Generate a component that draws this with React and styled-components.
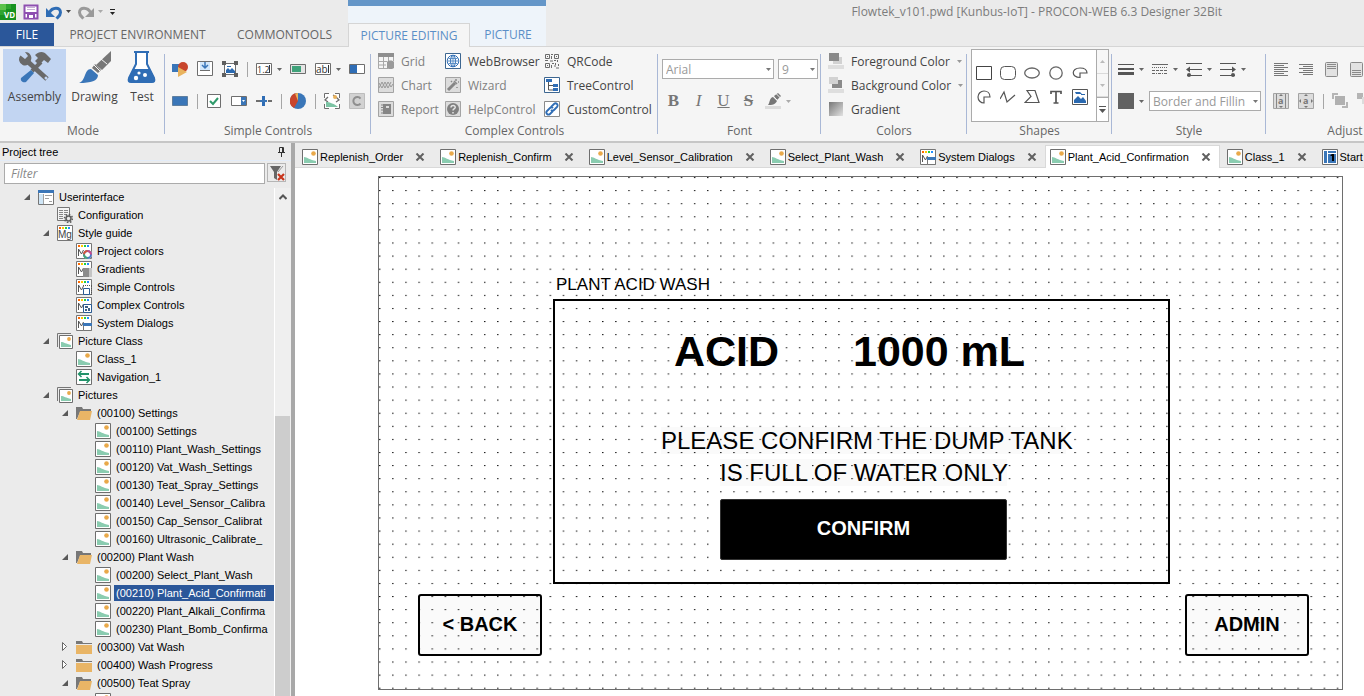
import { useState } from "react";
import styled, { createGlobalStyle } from "styled-components";

const GlobalStyle = createGlobalStyle`
    * {
        box-sizing: border-box;
    }
    body {
        margin: 0;
        overflow: hidden;
        background-color: #ebebeb;
        font-family: "Open Sans", "Noto Sans", sans-serif;
        font-size: 12px;
        color: #444444;
    }
    button, input, select {
        font: inherit;
        color: inherit;
        margin: 0;
        padding: 0;
        border: none;
        background: none;
        border-radius: 0;
    }
`;

const Page = styled.div`
    height: 100vh;
    display: flex;
    flex-direction: column;
`;

const Svg = styled.svg`
    flex: none;
    display: block;
    width: ${props => props.$size || 16}px;
    height: ${props => props.$size || 16}px;
`;

/* ---------- title bar and ribbon tabs ---------- */

const TitleBar = styled.header`
    display: flex;
    height: 23px;
`;

const QuickAccess = styled.div`
    width: 348px;
    display: flex;
    align-items: center;
    gap: 7px;
`;

const QuickButton = styled.button`
    display: flex;
    align-items: center;
    gap: 4px;
`;

const ContextHead = styled.div`
    width: 198px;
    background-color: #eef4fa;
    border-top: 6px solid #6496c8;
`;

const Title = styled.div`
    flex: 1;
    padding-right: 142px;
    line-height: 24px;
    text-align: right;
    white-space: nowrap;
    color: #7c7c7c;
`;

const RibbonTabs = styled.nav`
    display: flex;
    height: 24px;
    border-bottom: 1px solid #d5d5d5;
`;

const tabColors = {
    file: ["#2b579a", "#ffffff"],
    plain: ["transparent", "#666666"],
    active: ["#f5f5f5", "#5b8fc7"],
    context: ["#eef4fa", "#5b8fc7"],
};

const RibbonTab = styled.button`
    width: ${props => props.$width}px;
    height: ${props => props.$kind === "active" ? 24 : 23}px;
    background-color: ${props => tabColors[props.$kind][0]};
    color: ${props => tabColors[props.$kind][1]};
    border: ${props => props.$kind === "active" ? "1px solid #d5d5d5" : "none"};
    border-bottom: none;
    line-height: 22px;
    white-space: nowrap;
`;

/* ---------- ribbon ---------- */

const Ribbon = styled.div`
    display: flex;
    height: 96px;
    padding-left: 1px;
    overflow: hidden;
    background-color: #f5f5f5;
    border-bottom: 2px solid #c6c6c6;
`;

const Group = styled.section`
    flex: none;
    width: ${props => props.$width}px;
    display: flex;
    flex-direction: column;
    position: relative;

    &::after {
        content: "";
        position: absolute;
        right: 0;
        top: 7px;
        height: 80px;
        border-right: 1px solid #a9b8d6;
    }
`;

const GroupBody = styled.div`
    height: 76px;
    padding: ${props => props.$pad || "0"};
`;

const GroupName = styled.div`
    line-height: 16px;
    text-align: center;
    white-space: nowrap;
    color: #666666;
`;

const ModeRow = styled.div`
    display: flex;
`;

const ModeButton = styled.button`
    width: ${props => props.$width}px;
    height: 73px;
    padding-top: 2px;
    display: flex;
    flex-direction: column;
    align-items: center;
    background-color: ${props => props.$active ? "#c2d5f2" : "transparent"};

    span {
        line-height: 27px;
    }
`;

const ToolRow = styled.div`
    height: 32px;
    padding-left: ${props => props.$indent || 0}px;
    display: flex;
    align-items: center;
    gap: ${props => props.$gap || 8}px;
`;

const ToolButton = styled.button`
    flex: none;
    width: ${props => props.$width || 17}px;
    display: flex;
    align-items: center;
    justify-content: space-between;
`;

const Divider = styled.span`
    flex: none;
    width: 1px;
    height: 15px;
    background-color: #a6a6a6;
`;

const CommandGrid = styled.div`
    display: grid;
    grid-template-columns: ${props => props.$columns};
    grid-auto-rows: 24px;
`;

const Command = styled.button`
    display: flex;
    align-items: center;
    gap: 7px;
    white-space: nowrap;
    color: ${props => props.$muted ? "#808080" : "#444444"};
`;

const SelectBox = styled.div`
    position: relative;
    width: ${props => props.$width}px;

    select {
        appearance: none;
        display: block;
        width: 100%;
        height: 20px;
        padding: 0 14px 0 3px;
        border: 1px solid #ababab;
        background-color: #ffffff;
        color: #999999;
        overflow: hidden;
    }
    svg {
        position: absolute;
        right: 3px;
        top: 9px;
    }
`;

const Letter = styled.span`
    width: 17px;
    text-align: center;
    font-family: "Liberation Serif", serif;
    font-size: 17px;
    line-height: 20px;
    color: #777777;
    font-weight: ${props => props.$bold ? 700 : 400};
    font-style: ${props => props.$italic ? "italic" : "normal"};
    text-decoration: ${props => props.$line || "none"};
`;

const Gallery = styled.div`
    display: flex;
    height: 73px;
    background-color: #ffffff;
    border: 1px solid #ababab;
`;

const GalleryShapes = styled.div`
    flex: 1;
    padding: 11px 0 0 4px;
    display: grid;
    grid-template-columns: repeat(5, 24px);
    grid-auto-rows: 24px;
    align-items: center;
`;

const GalleryScroll = styled.div`
    width: 16px;
    display: flex;
    flex-direction: column;
    border-left: 1px solid #ababab;

    button {
        flex: 1;
        display: flex;
        align-items: center;
        justify-content: center;
        background-color: #f7f7f7;
        border-bottom: 1px solid #dadada;
    }
    button:last-child {
        background-color: #ffffff;
        border-top: 1px solid #ababab;
        border-bottom: none;
    }
`;

/* ---------- project tree ---------- */

const Main = styled.div`
    flex: 1;
    min-height: 0;
    display: flex;
`;

const Sidebar = styled.aside`
    width: 291px;
    display: flex;
    flex-direction: column;
    font-family: "Liberation Sans", Arial, sans-serif;
    font-size: 11px;
    color: #000000;
`;

const SidebarHead = styled.div`
    height: 18px;
    padding: 0 2px;
    display: flex;
    align-items: center;
    justify-content: space-between;
    border-bottom: 1px solid #e3ecf8;
`;

const FilterRow = styled.div`
    height: 27px;
    padding: 2px 5px 0 4px;
    display: flex;
    gap: 2px;

    input {
        flex: 1;
        min-width: 0;
        height: 21px;
        padding-left: 6px;
        border: 1px solid #ababab;
        background-color: #ffffff;
        font-family: "Open Sans", sans-serif;
        font-size: 12px;
        font-style: italic;
    }
    input::placeholder {
        color: #888888;
    }
    button {
        width: 19px;
        height: 19px;
        display: flex;
        align-items: center;
        justify-content: center;
        border: 1px solid #b5b5b5;
    }
`;

const TreeArea = styled.div`
    flex: 1;
    min-height: 0;
    display: flex;
`;

const Tree = styled.ul`
    flex: 1;
    min-width: 0;
    margin: 0;
    padding: 0;
    list-style: none;
    overflow: hidden;
`;

const TreeRow = styled.li`
    height: 18px;
    padding-left: ${props => 22 + props.$level * 19}px;
    display: flex;
    align-items: center;
`;

const Expander = styled.button`
    flex: none;
    width: 16px;
    height: 16px;
    display: block;
`;

const TreeLabel = styled.span`
    flex: ${props => props.$selected ? 1 : "none"};
    margin-left: 3px;
    padding: 0 2px;
    line-height: 16px;
    white-space: nowrap;
    overflow: hidden;
    background-color: ${props => props.$selected ? "#2b579a" : "transparent"};
    color: ${props => props.$selected ? "#ffffff" : "#000000"};
`;

const ScrollTrack = styled.div`
    width: 17px;
    display: flex;
    flex-direction: column;
    border-left: 1px solid #ffffff;
    background-color: #efefef;

    button {
        height: 18px;
        display: flex;
        align-items: center;
        justify-content: center;
    }
`;

const ScrollThumb = styled.div`
    flex: 1;
    width: 15px;
    margin-top: 210px;
    background-color: #cdcdcd;
`;

const Splitter = styled.div`
    width: 4px;
    background-color: #a8a8a8;
`;

/* ---------- editor ---------- */

const Editor = styled.main`
    flex: 1;
    min-width: 0;
    display: flex;
    flex-direction: column;
    background-color: #ffffff;
`;

const DocTabs = styled.div`
    flex: none;
    height: 25px;
    padding-top: 2px;
    display: flex;
    overflow: hidden;
    background-color: #ebebeb;
    box-shadow: inset 0 -1px 0 #d9d9d9;
    font-family: "Liberation Sans", Arial, sans-serif;
    font-size: 11px;
    color: #000000;
`;

const DocTab = styled.div`
    flex: none;
    padding: 0 8px 0 ${props => props.$active ? 4 : 7}px;
    display: flex;
    align-items: center;
    gap: 2px;
    white-space: nowrap;
    background-color: ${props => props.$active ? "#ffffff" : "transparent"};
    border: ${props => props.$active ? "1px solid #d9d9d9" : "none"};
    border-bottom: none;

    button {
        margin-left: 10px;
    }
`;

const Workspace = styled.div`
    flex: 1;
    padding: 8px 21px 0 83px;
`;

const Canvas = styled.div`
    height: 514px;
    position: relative;
    border: 1px solid #6e6e6e;
    padding: 96px 33px 0 39px;
    display: flex;
    flex-direction: column;
    font-family: "Liberation Sans", Arial, sans-serif;
    color: #000000;
`;

const GridDots = styled.svg`
    position: absolute;
    left: 0;
    top: 0;
    width: 100%;
    height: 100%;
`;

const Caption = styled.div`
    position: relative;
    margin: 0 0 2px 138px;
    font-size: 17px;
    line-height: 24px;
    white-space: nowrap;
`;

const WashPanel = styled.div`
    position: relative;
    height: 285px;
    margin: 0 139px 10px 135px;
    padding-top: 25px;
    border: 2px solid #000000;
    display: flex;
    flex-direction: column;
    align-items: center;
`;

const Amount = styled.div`
    padding-right: 24px;
    display: flex;
    gap: 74px;
    font-size: 43px;
    font-weight: 700;
    line-height: 50px;
    white-space: nowrap;
`;

const Message = styled.div`
    width: ${props => props.$width}px;
    margin: ${props => props.$top}px 0 0 4px;
    font-size: 24px;
    line-height: 27px;
    white-space: nowrap;
    background-color: rgba(0, 0, 0, 0.02);
`;

const ConfirmButton = styled.button`
    width: 287px;
    height: 61px;
    margin: 13px 0 0 4px;
    border: 1px solid #333333;
    border-radius: 2px;
    background-color: #000000;
    color: #ffffff;
    font-size: 20px;
    font-weight: 700;
    line-height: 24px;
    padding-bottom: 3px;
`;

const NavRow = styled.div`
    position: relative;
    display: flex;
    justify-content: space-between;
`;

const NavButton = styled.button`
    width: 124px;
    height: 62px;
    padding-bottom: 3px;
    border: 2px solid #000000;
    border-radius: 3px;
    background-color: rgba(0, 0, 0, 0.02);
    font-size: 20px;
    font-weight: 700;
    line-height: 24px;
`;

/* ---------- icons ---------- */

const Icon = ({ name, size }) => (
    <Svg $size={size} viewBox={size === 32 ? "0 0 32 32" : "0 0 16 16"} fill="none" aria-hidden="true">
        {icons[name]}
    </Svg>
);

const Arrow = ({ color = "#666666", up }) => (
    <svg width="5" height="3" viewBox="0 0 5 3" aria-hidden="true">
        <path d={up ? "M0 3h5L2.500 0z" : "M0 0h5L2.500 3z"} fill={color} />
    </svg>
);

const Cross = () => (
    <svg width="10" height="8" viewBox="0 0 10 8" aria-hidden="true">
        <path d="M1.500 0.500l7 7M8.500 0.500l-7 7" stroke="#606060" strokeWidth="2" />
    </svg>
);

const guideBase = (
    <>
        <path d="M.5.5h15v15H.5z" fill="#fff" stroke="#767676" />
        <path d="M2 2h2v2H2z" fill="#ff6a00" />
        <path d="M5 2h2v2H5z" fill="#ffc800" />
        <path d="M8 2h2v2H8z" fill="#20d040" />
        <path d="M11 2h2v2h-2z" fill="#2090ff" />
    </>
);
const guideM = <path d="M2.500 13V6l3 5 2-4" stroke="#555" />;
const greyBox = <path d="M.5.5h15v15H.5z" fill="#dcdcdc" stroke="#a3a3a3" />;
const whiteBox = <path d="M.5.5h15v15H.5z" fill="#fff" stroke="#6e6e6e" />;

const icons = {
    logo: (
        <>
            <path d="M0 0h16v16H0z" fill="#17921f" />
            <path d="M0 0h6v6H0z" fill="#5cc24a" />
            <path d="M6 0h5v5H6z" fill="#2fa52f" />
            <path d="M0 6h6v5H0z" fill="#2fa52f" />
            <text x="4" y="14" fill="#fff" fontSize="8" fontWeight="700">VD</text>
        </>
    ),
    save: (
        <>
            <path d="M1.500 1.500h13v13h-13z" stroke="#8e4fb0" strokeWidth="2" fill="#fff" />
            <path d="M1 8h14v2H1z" fill="#8e4fb0" />
            <path d="M4 10h8v5H4z" fill="#8e4fb0" />
            <path d="M6 11h4v3H6z" fill="#fff" />
            <path d="M4 3.500h8M4 5.500h8" stroke="#c9b0d6" />
        </>
    ),
    undo: (
        <>
            <path d="M0 4v9h9z" fill="#2f6db5" />
            <path d="M3.500 8.500C6 3 14.500 2.500 14.500 8.500c0 3-2 4-4 6" stroke="#2f6db5" strokeWidth="3" />
        </>
    ),
    redo: (
        <>
            <path d="M16 4v9H7z" fill="#9a9a9a" />
            <path d="M12.500 8.500C10 3 1.500 2.500 1.500 8.500c0 3 2 4 4 6" stroke="#9a9a9a" strokeWidth="3" />
        </>
    ),
    assembly: (
        <>
            <path d="M8 10L28 28" stroke="#696969" strokeWidth="5" />
            <path d="M12 9A6 6 0 1 1 1.500 4.500L6 8l3-3-3-4a6 6 0 0 1 6 8z" fill="#696969" />
            <path d="M22 11L13 20" stroke="#696969" strokeWidth="4" />
            <path d="M12 19l3 3-8 9c-3 1-6-1-5-4z" fill="#3a76b8" />
            <path d="M16 4c4-4 9-4 12 0l4 4-3 4-4-3-5 5-4-4 3-3z" fill="#696969" />
            <circle cx="27" cy="27" r="1.500" fill="#c2d5f2" />
        </>
    ),
    drawing: (
        <>
            <path d="M32 0v10l-9 9-6-5z" fill="#777777" />
            <path d="M16 13l6 6-3 3-6-5z" fill="#777777" />
            <path d="M22 8l6 5M15 14l6 6" stroke="#f5f5f5" />
            <path d="M12 18l7 6c0 6-7 8-19 8 7-2 5-14 12-14z" fill="#3a76b8" />
        </>
    ),
    test: (
        <>
            <path d="M8 1h15M10 1v12L3 27c-1 3 0 4 2 4h21c2 0 3-1 2-4L21 13V1" stroke="#2f6db5" strokeWidth="2" fill="#fff" />
            <path d="M7 18h17l5 10c0 2-1 3-2 3H5c-2 0-3-1-2-3z" fill="#2f6db5" />
            <circle cx="13" cy="22" r="1.600" fill="#fff" />
            <circle cx="19" cy="24" r="2" fill="#fff" />
            <circle cx="10" cy="27" r="2.200" fill="#fff" />
        </>
    ),
    shapes: (
        <>
            <path d="M0 3h8v8H0z" fill="#3a76b8" />
            <circle cx="11" cy="6" r="5" fill="#c8452c" />
            <path d="M6 6l9 5-9 5z" fill="#e9b35e" />
        </>
    ),
    download: (
        <>
            <path d="M.5.5h15v14H.5z" fill="#fff" stroke="#6e6e6e" />
            <path d="M3 1h10v8H3z" fill="#d4e8fa" />
            <path d="M8 1v6M5 4l3 3 3-3" stroke="#3a76b8" strokeWidth="1.500" />
            <path d="M3 9.500h10" stroke="#6e6e6e" />
        </>
    ),
    handles: (
        <>
            <path d="M2.500 2.500h11v11h-11z" fill="#fff" stroke="#6e6e6e" />
            <path d="M0 0h4v4H0zM12 0h4v4h-4zM0 12h4v4H0zM12 12h4v4h-4z" fill="#5f5f5f" />
            <path d="M4 12V9l2-2 2 2 2-2 3 3v2zM5 5h4v1H5z" fill="#2a69b0" />
        </>
    ),
    number: (
        <>
            <path d="M.5 2.500h15v11H.5z" fill="#fff" stroke="#6e6e6e" />
            <text x="1" y="12" fill="#333" fontSize="9">1.2</text>
            <path d="M13.500 4v8" stroke="#333" />
        </>
    ),
    bar: (
        <>
            <path d="M.5 3.500h15v9H.5z" fill="#e5e5e5" stroke="#6e6e6e" />
            <path d="M2 5h9v6H2z" fill="#3fa27a" />
        </>
    ),
    text: (
        <>
            <path d="M.5 2.500h15v11H.5z" fill="#fff" stroke="#6e6e6e" />
            <text x="1" y="12" fill="#333" fontSize="10">ab</text>
            <path d="M13.500 4v8" stroke="#333" />
        </>
    ),
    toggle: (
        <>
            <path d="M.5 3.500h15v9H.5z" fill="#fff" stroke="#6e6e6e" />
            <path d="M1 4h7v8H1z" fill="#2f6db5" />
        </>
    ),
    rect: <path d="M.5 3.500h15v9H.5z" fill="#3a76b8" stroke="#5f7f9f" />,
    check: (
        <>
            <path d="M1.500 1.500h13v13h-13z" fill="#fff" stroke="#6e6e6e" />
            <path d="M4 8l3 3 5-6" stroke="#2f9b6b" strokeWidth="2" />
        </>
    ),
    combo: (
        <>
            <path d="M.5 3.500h15v9H.5z" fill="#fff" stroke="#6e6e6e" />
            <path d="M10 4h5v8h-5z" fill="#3a76b8" />
            <path d="M11 7h3l-1.500 2z" fill="#fff" />
        </>
    ),
    slider: (
        <>
            <path d="M0 8h4M12 8h4" stroke="#6e6e6e" strokeWidth="2" />
            <path d="M6 3h3v10H6z" fill="#2f6db5" />
            <path d="M4 8h7" stroke="#3a76b8" strokeWidth="2" />
        </>
    ),
    pie: (
        <>
            <circle cx="8" cy="8" r="8" fill="#3a76b8" />
            <path d="M8 8L4 15A8 8 0 0 1 7 0z" fill="#c8452c" />
            <path d="M8 8V0a8 8 0 0 0-3 .6z" fill="#e9b35e" />
        </>
    ),
    loop: (
        <>
            <path d="M.5.5h15v15H.5z" fill="#fff" />
            <path d="M5 .5H.5V5M11 .5h4.500V5M5 15.500H.5V11M11 15.500h4.500V11" stroke="#6e6e6e" />
            <path d="M4 4L1 7l3 2M12 4l3 3-3 2M9 2l2 1" stroke="#6e6e6e" strokeWidth="1.300" />
            <path d="M2 14V9c3 0 9 2 12 5z" fill="#7cc4a4" />
            <circle cx="11" cy="4" r="2" fill="#e9b35e" />
        </>
    ),
    letterC: (
        <>
            <path d="M.5.5h15v15H.5z" fill="#d2d2d2" stroke="#bdbdbd" />
            <path d="M11.500 5.500a4 4 0 1 0 0 5" stroke="#8f8f8f" strokeWidth="2" />
        </>
    ),
    grid: (
        <>
            <path d="M0 0h16v4H0z" fill="#8f8f8f" />
            <path d="M.5 4v11.500H10M5.500 4v11M10.500 4v5M15.500 4v4M0 8.500h9M0 12h8" stroke="#a8a8a8" />
            <path d="M9 9c1-2 6-2 7 0v6c-1 1.500-6 1.500-7 0z" fill="#9a9a9a" />
        </>
    ),
    chart: <>{greyBox}<path d="M1 11l3-6 3 6 3-6 3 5 2-3M1 6l3 5 3-6 3 6 3-6" stroke="#999" /></>,
    report: (
        <>
            {greyBox}
            <path d="M5 3h8v10H5z" fill="#858585" />
            <path d="M3 4h3M3 6.500h3M3 9h3M3 12h3" stroke="#858585" />
            <path d="M8 5h3v2H8z" fill="#dcdcdc" />
        </>
    ),
    web: (
        <>
            <path d="M.5.5h15v15H.5z" fill="#fff" stroke="#3d6690" />
            <circle cx="8" cy="8" r="5.800" stroke="#2f6db5" />
            <ellipse cx="8" cy="8" rx="2.500" ry="5.500" stroke="#2f6db5" />
            <path d="M2.500 8h11M3.500 5.500h9M3.500 10.500h9M8 2.500v11" stroke="#5b8fc7" />
        </>
    ),
    wizard: <>{greyBox}<path d="M3 13l7-7" stroke="#858585" strokeWidth="3" /><path d="M9 4l3 3M11 2v2M13 5h1M6 4l1 1M12 10v1" stroke="#8a8a8a" strokeWidth="1.500" /></>,
    help: (
        <>
            {greyBox}
            <circle cx="8" cy="8" r="6" fill="#808080" />
            <path d="M6 6.500c0-3 4.500-2.500 4.200 0C10 8 8 8 8 9.500M8 11v1.500" stroke="#e5e5e5" strokeWidth="1.500" />
        </>
    ),
    qr: (
        <path
            d="M1.500 1.500h4v4h-4zM10.500 1.500h4v4h-4zM1.500 10.500h4v4h-4zM3 3.500h1M12 3.500h1M3 12.500h1M7 1.500h2M7.500 3v3M1 7.500h3M6 8h3M10 7.500h2M13.500 7v2M8 10.500h2M7.500 12v3M10 13h2M11.500 10v2M14.500 11v2M12 15h3"
            stroke="#6b6b6b"
        />
    ),
    treeControl: (
        <>
            <path d="M.5.5h15v15H.5z" fill="#fff" stroke="#3d6690" />
            <path d="M2 2h6v3H2zM9 7h5v3H9zM9 11h5v3H9z" fill="#2f6db5" />
            <path d="M4.500 5v8H9M4.500 8.500H9" stroke="#555" />
        </>
    ),
    link: (
        <>
            <path d="M.5.5h15v15H.5z" fill="#fff" stroke="#8a8a8a" />
            <path d="M7 6l3-3c2-2 5 1 3 3l-3 3c-1 1-2 1-3 0M9 10l-3 3c-2 2-5-1-3-3l3-3c1-1 2-1 3 0" stroke="#2f6db5" strokeWidth="1.800" />
        </>
    ),
    fontColor: (
        <>
            <path d="M0 13h16v3H0z" fill="#dcdcdc" />
            <path d="M9 3l4-3 3 3-4 4z" fill="#777" />
            <path d="M8 4l4 4c-2 4-5 4-9 4 2-2 1-7 5-8z" fill="#777" />
            <path d="M8.500 3.500l4 4M11.500 1l4 4" stroke="#f5f5f5" />
        </>
    ),
    foreground: (
        <>
            <path d="M5 4h9v7H5z" fill="#d2d2d2" />
            <path d="M1 0h10v8H1z" fill="#8a8a8a" />
            <path d="M0 12h16v4H0z" fill="#dedede" />
        </>
    ),
    background: (
        <>
            <path d="M4 3h10v8H4z" fill="#8a8a8a" />
            <path d="M1 0h9v7H1z" fill="#d2d2d2" />
            <path d="M0 12h16v4H0z" fill="#dedede" />
        </>
    ),
    gradient: (
        <>
            <defs>
                <linearGradient id="fade" x1="0" y1="0" x2="1" y2="1">
                    <stop offset="0" stopColor="#777" />
                    <stop offset="1" stopColor="#e2e2e2" />
                </linearGradient>
            </defs>
            <path d="M1 1h14v14H1z" fill="url(#fade)" />
        </>
    ),
    sRect: <path d="M.5 1.500h15v13H.5z" stroke="#444" />,
    sRound: <rect x="0.500" y="1.500" width="15" height="13" rx="4" stroke="#555" />,
    sEllipse: <ellipse cx="8" cy="8" rx="7.300" ry="5" stroke="#666" strokeWidth="1.300" />,
    sCircle: <circle cx="8" cy="8" r="6.200" stroke="#666" strokeWidth="1.300" />,
    sArc: <path d="M8 12.500C-1 12.500-1 3 8 3c5 0 7 2 7 5H8z" stroke="#555" strokeWidth="1.200" />,
    sPie: <path d="M8 2a6 6 0 1 0 0 12V8h6c0-4-3-6-6-6z" stroke="#555" strokeWidth="1.200" />,
    sPoly: <path d="M0 10l4-7 3 10 8-7" stroke="#555" strokeWidth="1.200" />,
    sShape: <path d="M3 1.500h8l4 12H1l6-6z" stroke="#555" strokeWidth="1.200" />,
    sText: <path d="M3 5V2.500h10V5M8 2v12M5.500 14h5" stroke="#555" strokeWidth="1.700" />,
    sImage: (
        <>
            <path d="M.5.5h15v15H.5z" fill="#fff" stroke="#555" />
            <path d="M2 14v-3l4-4 3 3 2-2 3 4v2zM3 3h5l2 2H4zM9 5h4v1H9z" fill="#2a69b0" />
        </>
    ),
    lineWidth: <><path d="M0 3.500h16" stroke="#555" /><path d="M0 8h16" stroke="#555" strokeWidth="2" /><path d="M0 12.500h16" stroke="#555" strokeWidth="3" /></>,
    lineDash: (
        <>
            <path d="M0 3.500h16" stroke="#666" />
            <path d="M0 6.500h16" stroke="#666" strokeDasharray="1 1" />
            <path d="M0 9.500h16" stroke="#666" strokeDasharray="3 1" />
            <path d="M0 12.500h16" stroke="#666" strokeDasharray="3 1 1 1" />
        </>
    ),
    lineStart: <><path d="M0 2.500h16M1 8.500h15M1 14.500h15" stroke="#555" /><path d="M4 5.500v6l-4-3z" fill="#555" /><circle cx="3" cy="14" r="2" fill="#555" /></>,
    lineEnd: <><path d="M0 2.500h16M0 8.500h15M0 14.500h15" stroke="#555" /><path d="M12 5.500v6l4-3z" fill="#555" /><circle cx="13" cy="14" r="2" fill="#555" /></>,
    fill: <path d="M0 0h16v16H0z" fill="#616161" />,
    alignLeft: <path d="M1 2.500h14M1 4.500h10M1 6.500h14M1 8.500h10M1 10.500h14M1 12.500h10M1 14.500h14" stroke="#777" />,
    alignRight: <path d="M1 3.500h14M5 5.500h10M1 7.500h14M5 9.500h10M1 11.500h14M5 13.500h10" stroke="#777" />,
    alignTop: <><rect x="2.500" y="1.500" width="12" height="14" rx="1" fill="#e2e2e2" stroke="#8a8a8a" /><path d="M4 3.500h9M4 5.500h9M4 7.500h9" stroke="#8a8a8a" /></>,
    alignBottom: <><rect x="2.500" y="1.500" width="12" height="14" rx="1" fill="#e2e2e2" stroke="#8a8a8a" /><path d="M4 9.500h9M4 11.500h9M4 13.500h9" stroke="#8a8a8a" /></>,
    fitHeight: (
        <>
            {greyBox}
            <path d="M3.500 1v14M12.500 1v14" stroke="#888" />
            <text x="5" y="11" fill="#777" fontSize="9" fontWeight="700">a</text>
            <path d="M6 3h4L8 1zM6 13h4l-2 2z" fill="#777" />
        </>
    ),
    fitBoth: (
        <>
            {greyBox}
            <text x="5" y="11" fill="#777" fontSize="9" fontWeight="700">a</text>
            <path d="M6 3h4L8 1zM6 13h4l-2 2zM3 6v4L1 8zM13 6v4l2-2z" fill="#777" />
        </>
    ),
    bringFront: <><path d="M0 6V0h6v2H2v4z" fill="#b5b5b5" /><path d="M10 15h6V9h-2v4h-4z" fill="#b5b5b5" /><path d="M3 3h10v9H3z" fill="#b0b0b0" /></>,
    sendBack: <><path d="M0 0h6v6H0zM8 8h8v7H8z" fill="#b5b5b5" /><path d="M5 4h8v7H5z" fill="#dcdcdc" /></>,
    pin: <path d="M5 8.500h7M6.500 8V3.500h4V8M9.500 4v4M8.500 9v4" stroke="#333" />,
    clearFilter: (
        <>
            <path d="M1 1h11L8 7v8l-3-2V7z" fill="#666" />
            <path d="M9 7l5-6" stroke="#999" />
            <path d="M9 9l6 6M15 9l-6 6" stroke="#c8351c" strokeWidth="2.200" />
        </>
    ),
    window: (
        <>
            <path d="M.5 1.500h15v14H.5z" fill="#fff" stroke="#767676" />
            <path d="M0 1h16v3H0z" fill="#3a76b8" />
            <path d="M1 5h4v10H1z" fill="#cfe6f7" />
            <path d="M7 6.500h7M7 9.500h4M11 12.500h3M5.500 5v10" stroke="#a0a0a0" />
        </>
    ),
    config: (
        <>
            <path d="M.5.5h12v13H.5z" fill="#f5f5f5" stroke="#767676" />
            <path d="M2 3.500h4M7 3.500h4M2 5.500h4M7 5.500h4M2 7.500h4M7 7.500h3M2 9.500h4M2 11.500h4" stroke="#888" />
            <circle cx="11.500" cy="11.500" r="4" stroke="#606060" strokeWidth="1.500" strokeDasharray="1.600 1.500" />
            <circle cx="11.500" cy="11.500" r="2.500" fill="#ebebeb" stroke="#606060" strokeWidth="1.600" />
        </>
    ),
    guide: (
        <>
            {guideBase}
            <text x="1" y="13" fill="#444" fontSize="10">Mg</text>
        </>
    ),
    guideColors: (
        <>
            {guideBase}{guideM}
            <circle cx="11.500" cy="11.500" r="4.500" fill="#fff" />
            <circle cx="11.500" cy="11.500" r="3.500" stroke="#4a78c8" strokeWidth="2" />
            <path d="M11.500 8a3.500 3.500 0 0 1 3.500 3.500" stroke="#c84a8a" strokeWidth="2" />
            <path d="M8 11.500a3.500 3.500 0 0 1 3.500-3.500" stroke="#d8573a" strokeWidth="2" />
            <path d="M11.500 15A3.500 3.500 0 0 1 8 11.500" stroke="#48a878" strokeWidth="2" />
        </>
    ),
    guideGradient: <>{guideBase}{guideM}<path d="M7 7h9v9H7z" fill="#8c8c8c" /><path d="M13 7h3v9h-3z" fill="#c4c4c4" /></>,
    guideSimple: <>{guideBase}{guideM}<path d="M7.500 9.500h6v6h-6z" fill="#fff" stroke="#2b5c94" /><path d="M7 6.500h9M15.500 7v9" stroke="#555" strokeDasharray="1 1" /></>,
    guideComplex: <>{guideBase}{guideM}<path d="M7.500 7.500h8v8h-8z" fill="#fff" stroke="#2b5c94" /><path d="M9 9h3v2H9zM12 11h2v3h-2zM9 12h2v2H9z" fill="#3d5f86" /></>,
    guideDialog: <>{guideBase}{guideM}<path d="M7.500 8.500h8v7h-8z" fill="#fff" stroke="#767676" /><path d="M7 8h9v3H7z" fill="#3a76b8" /></>,
    picture: (
        <>
            {whiteBox}
            <circle cx="11.500" cy="4.500" r="2.300" fill="#e9a94a" />
            <path d="M2 14V8c3 0 6 3 12 4v2z" fill="#8accb0" />
        </>
    ),
    pictures: (
        <>
            <path d="M.5 14V.5H14" stroke="#767676" />
            <path d="M2.500 2.500h13v13h-13z" fill="#fff" stroke="#6e6e6e" />
            <circle cx="12" cy="6" r="1.900" fill="#e9a94a" />
            <path d="M4 14V9c3 0 5 2 10 3v2z" fill="#8accb0" />
        </>
    ),
    navigation: (
        <>
            {whiteBox}
            <path d="M3 5h10M3 11h10" stroke="#23936a" strokeWidth="2" />
            <path d="M5.500 2L2.500 5l3 3M10.500 8l3 3-3 3" stroke="#23936a" strokeWidth="1.500" />
        </>
    ),
    folderOpen: (
        <>
            <path d="M0 2h6l1 2h8v3H4L1 14H0z" fill="#777" />
            <path d="M4 6h12l-2 9H1z" fill="#e9b566" />
        </>
    ),
    folder: (
        <>
            <path d="M0 2h6l1 2h9v1H0z" fill="#777" />
            <path d="M0 6h16v9H0z" fill="#e9b566" />
        </>
    ),
    start: (
        <>
            <path d="M.5.5h15v15H.5z" fill="#fff" stroke="#6e6e6e" />
            <path d="M2 2h3v12H2zM6 2h8v2H6zM6 5h8v9H6z" fill="#3a76b8" />
            <path d="M8 6.500l2-1.500h2v7h-2V7z" fill="#000" />
        </>
    ),
    collapse: <path d="M8 5v6H2z" fill="#595959" />,
    expand: <path d="M2.500 3.500v8l4-4z" fill="#fff" stroke="#666" />,
};

/* ---------- data ---------- */

const ribbonTabs = [
    ["FILE", 54, "file"],
    ["PROJECT ENVIRONMENT", 167, "plain"],
    ["COMMONTOOLS", 127, "plain"],
    ["PICTURE EDITING", 122, "active"],
    ["PICTURE", 76, "context"],
];

const simpleControls = [
    ["shapes", "download", "handles", "|", "number+", "bar", "text+", "toggle"],
    ["rect", "|", "check", "combo", "slider", "|", "pie", "|", "loop", "letterC"],
];

const complexControls = [
    ["grid", "Grid", true], ["web", "WebBrowser"], ["qr", "QRCode"],
    ["chart", "Chart", true], ["wizard", "Wizard", true], ["treeControl", "TreeControl"],
    ["report", "Report", true], ["help", "HelpControl", true], ["link", "CustomControl"],
];

const shapes = ["sRect", "sRound", "sEllipse", "sCircle", "sArc", "sPie", "sPoly", "sShape", "sText", "sImage"];

// [level, icon, label, expander state]
const treeItems = [
    [0, "window", "Userinterface", "open"],
    [1, "config", "Configuration"],
    [1, "guide", "Style guide", "open"],
    [2, "guideColors", "Project colors"],
    [2, "guideGradient", "Gradients"],
    [2, "guideSimple", "Simple Controls"],
    [2, "guideComplex", "Complex Controls"],
    [2, "guideDialog", "System Dialogs"],
    [1, "pictures", "Picture Class", "open"],
    [2, "picture", "Class_1"],
    [2, "navigation", "Navigation_1"],
    [1, "pictures", "Pictures", "open"],
    [2, "folderOpen", "(00100) Settings", "open"],
    [3, "picture", "(00100) Settings"],
    [3, "picture", "(00110) Plant_Wash_Settings"],
    [3, "picture", "(00120) Vat_Wash_Settings"],
    [3, "picture", "(00130) Teat_Spray_Settings"],
    [3, "picture", "(00140) Level_Sensor_Calibra"],
    [3, "picture", "(00150) Cap_Sensor_Calibrat"],
    [3, "picture", "(00160) Ultrasonic_Calibrate_"],
    [2, "folderOpen", "(00200) Plant Wash", "open"],
    [3, "picture", "(00200) Select_Plant_Wash"],
    [3, "picture", "(00210) Plant_Acid_Confirmati"],
    [3, "picture", "(00220) Plant_Alkali_Confirma"],
    [3, "picture", "(00230) Plant_Bomb_Confirma"],
    [2, "folder", "(00300) Vat Wash", "closed"],
    [2, "folder", "(00400) Wash Progress", "closed"],
    [2, "folderOpen", "(00500) Teat Spray", "open"],
    [3, "picture", ""],
];

const docTabs = [
    ["picture", "Replenish_Order"],
    ["picture", "Replenish_Confirm"],
    ["picture", "Level_Sensor_Calibration"],
    ["picture", "Select_Plant_Wash"],
    ["guideDialog", "System Dialogs"],
    ["picture", "Plant_Acid_Confirmation"],
    ["picture", "Class_1"],
    ["start", "Start"],
];

/* ---------- components ---------- */

function Tool({ name }) {
    if (name === "|") {
        return <Divider />;
    }
    const menu = name.endsWith("+");
    const icon = menu ? name.slice(0, -1) : name;
    return (
        <ToolButton $width={menu ? 26 : 17} aria-label={icon}>
            <Icon name={icon} />
            {menu && <Arrow />}
        </ToolButton>
    );
}

function Select({ label, value, width }) {
    return (
        <SelectBox $width={width}>
            <select aria-label={label} defaultValue={value}>
                <option>{value}</option>
            </select>
            <Arrow color="#777777" />
        </SelectBox>
    );
}

function RibbonBar() {
    return (
        <Ribbon>
            <Group $width={164}>
                <GroupBody $pad="2px 0 0 2px">
                    <ModeRow>
                        <ModeButton $width={63} $active><Icon name="assembly" size={32} /><span>Assembly</span></ModeButton>
                        <ModeButton $width={57}><Icon name="drawing" size={32} /><span>Drawing</span></ModeButton>
                        <ModeButton $width={38}><Icon name="test" size={32} /><span>Test</span></ModeButton>
                    </ModeRow>
                </GroupBody>
                <GroupName>Mode</GroupName>
            </Group>
            <Group $width={206}>
                <GroupBody $pad="6px 0 0 7px">
                    {simpleControls.map((row, i) => (
                        <ToolRow key={i}>
                            {row.map((name, j) => <Tool key={j} name={name} />)}
                        </ToolRow>
                    ))}
                </GroupBody>
                <GroupName>Simple Controls</GroupName>
            </Group>
            <Group $width={287}>
                <GroupBody $pad="2px 0 0 7px">
                    <CommandGrid $columns="67px 99px 1fr">
                        {complexControls.map(([icon, label, muted]) => (
                            <Command key={label} $muted={muted}><Icon name={icon} />{label}</Command>
                        ))}
                    </CommandGrid>
                </GroupBody>
                <GroupName>Complex Controls</GroupName>
            </Group>
            <Group $width={163}>
                <GroupBody $pad="6px 0 0 4px">
                    <ToolRow $gap={4}>
                        <Select label="Font" value="Arial" width={112} />
                        <Select label="Font size" value="9" width={40} />
                    </ToolRow>
                    <ToolRow $indent={3}>
                        <ToolButton aria-label="Bold"><Letter $bold>B</Letter></ToolButton>
                        <ToolButton aria-label="Italic"><Letter $italic>I</Letter></ToolButton>
                        <ToolButton aria-label="Underline"><Letter $line="underline">U</Letter></ToolButton>
                        <ToolButton aria-label="Strikethrough"><Letter $bold $line="line-through">S</Letter></ToolButton>
                        <ToolButton aria-label="Font color" $width={26}><Icon name="fontColor" /><Arrow color="#aaaaaa" /></ToolButton>
                    </ToolRow>
                </GroupBody>
                <GroupName>Font</GroupName>
            </Group>
            <Group $width={146}>
                <GroupBody $pad="2px 0 0 7px">
                    <CommandGrid $columns="1fr">
                        <Command><Icon name="foreground" />Foreground Color<Arrow color="#999999" /></Command>
                        <Command><Icon name="background" />Background Color<Arrow color="#999999" /></Command>
                        <Command><Icon name="gradient" />Gradient</Command>
                    </CommandGrid>
                </GroupBody>
                <GroupName>Colors</GroupName>
            </Group>
            <Group $width={145}>
                <GroupBody $pad="2px 3px 0 4px">
                    <Gallery>
                        <GalleryShapes>
                            {shapes.map(name => <Tool key={name} name={name} />)}
                        </GalleryShapes>
                        <GalleryScroll>
                            <button aria-label="Previous shapes"><Arrow up color="#bbbbbb" /></button>
                            <button aria-label="Next shapes"><Arrow color="#bbbbbb" /></button>
                            <button aria-label="All shapes">
                                <svg width="7" height="7" viewBox="0 0 7 7"><path d="M0 .5h7" stroke="#555" /><path d="M0 3h7L3.500 7z" fill="#555" /></svg>
                            </button>
                        </GalleryScroll>
                    </Gallery>
                </GroupBody>
                <GroupName>Shapes</GroupName>
            </Group>
            <Group $width={154}>
                <GroupBody $pad="6px 0 0 6px">
                    <ToolRow>
                        {["lineWidth+", "lineDash+", "lineStart+", "lineEnd+"].map(name => <Tool key={name} name={name} />)}
                    </ToolRow>
                    <ToolRow $gap={5}>
                        <Tool name="fill+" />
                        <Select label="Style" value="Border and Fillin" width={112} />
                    </ToolRow>
                </GroupBody>
                <GroupName>Style</GroupName>
            </Group>
            <Group $width={158}>
                <GroupBody $pad="6px 0 0 7px">
                    <ToolRow>
                        {["alignLeft", "alignRight", "alignTop", "alignBottom"].map(name => <Tool key={name} name={name} />)}
                    </ToolRow>
                    <ToolRow>
                        {["fitHeight", "fitBoth", "|", "bringFront", "sendBack"].map(name => <Tool key={name} name={name} />)}
                    </ToolRow>
                </GroupBody>
                <GroupName>Adjust</GroupName>
            </Group>
        </Ribbon>
    );
}

function ProjectTree() {
    const [filter, setFilter] = useState("");
    const [selected, setSelected] = useState(22);

    return (
        <Sidebar>
            <SidebarHead>Project tree<Icon name="pin" /></SidebarHead>
            <FilterRow>
                <input aria-label="Filter" placeholder="Filter" value={filter} onChange={(e) => setFilter(e.target.value)} />
                <button aria-label="Clear filter" onClick={() => setFilter("")}><Icon name="clearFilter" /></button>
            </FilterRow>
            <TreeArea>
                <Tree>
                    {treeItems.map(([level, icon, label, state], i) => (
                        <TreeRow key={i} $level={level} onClick={() => setSelected(i)}>
                            {state ? (
                                <Expander aria-label={"Toggle " + label}>
                                    <Icon name={state === "open" ? "collapse" : "expand"} />
                                </Expander>
                            ) : (
                                <Expander as="span" />
                            )}
                            <Icon name={icon} />
                            <TreeLabel $selected={selected === i}>{label}</TreeLabel>
                        </TreeRow>
                    ))}
                </Tree>
                <ScrollTrack>
                    <button aria-label="Scroll up">
                        <svg width="8" height="6" viewBox="0 0 8 6"><path d="M.5 5L4 1.500 7.500 5" stroke="#555" strokeWidth="2" fill="none" /></svg>
                    </button>
                    <ScrollThumb />
                </ScrollTrack>
            </TreeArea>
        </Sidebar>
    );
}

function PictureCanvas() {
    return (
        <Canvas>
            <GridDots viewBox="0 0 734 391" preserveAspectRatio="none" aria-hidden="true">
                <defs>
                    <pattern id="dots" width="10" height="10" patternUnits="userSpaceOnUse">
                        <rect width="1.100" height="0.800" fill="#111" />
                    </pattern>
                </defs>
                <rect width="734" height="391" fill="url(#dots)" />
            </GridDots>
            <Caption>PLANT ACID WASH</Caption>
            <WashPanel>
                <Amount><span>ACID</span><span>1000 mL</span></Amount>
                <Message $width={405} $top={51}>PLEASE CONFIRM THE DUMP TANK</Message>
                <Message $width={287} $top={5}>IS FULL OF WATER ONLY</Message>
                <ConfirmButton>CONFIRM</ConfirmButton>
            </WashPanel>
            <NavRow>
                <NavButton>&lt; BACK</NavButton>
                <NavButton>ADMIN</NavButton>
            </NavRow>
        </Canvas>
    );
}

function App() {
    const [activeDoc, setActiveDoc] = useState("Plant_Acid_Confirmation");

    return (
        <>
            <GlobalStyle />
            <Page>
                <TitleBar>
                    <QuickAccess>
                        <Icon name="logo" />
                        <QuickButton aria-label="Save"><Icon name="save" /></QuickButton>
                        <QuickButton aria-label="Undo"><Icon name="undo" /><Arrow color="#444444" /></QuickButton>
                        <QuickButton aria-label="Redo"><Icon name="redo" /><Arrow color="#aaaaaa" /></QuickButton>
                        <QuickButton aria-label="Customize">
                            <svg width="5" height="6" viewBox="0 0 5 6"><path d="M0 .5h5" stroke="#222" /><path d="M0 3h5L2.500 6z" fill="#222" /></svg>
                        </QuickButton>
                    </QuickAccess>
                    <ContextHead />
                    <Title>Flowtek_v101.pwd [Kunbus-IoT] - PROCON-WEB 6.3 Designer 32Bit</Title>
                </TitleBar>
                <RibbonTabs>
                    {ribbonTabs.map(([label, width, kind]) => (
                        <RibbonTab key={label} $width={width} $kind={kind}>{label}</RibbonTab>
                    ))}
                </RibbonTabs>
                <RibbonBar />
                <Main>
                    <ProjectTree />
                    <Splitter />
                    <Editor>
                        <DocTabs>
                            {docTabs.map(([icon, label]) => (
                                <DocTab key={label} $active={activeDoc === label} onClick={() => setActiveDoc(label)}>
                                    <Icon name={icon} />
                                    {label}
                                    <button aria-label={"Close " + label}><Cross /></button>
                                </DocTab>
                            ))}
                        </DocTabs>
                        <Workspace>
                            <PictureCanvas />
                        </Workspace>
                    </Editor>
                </Main>
            </Page>
        </>
    );
}

export default App;
